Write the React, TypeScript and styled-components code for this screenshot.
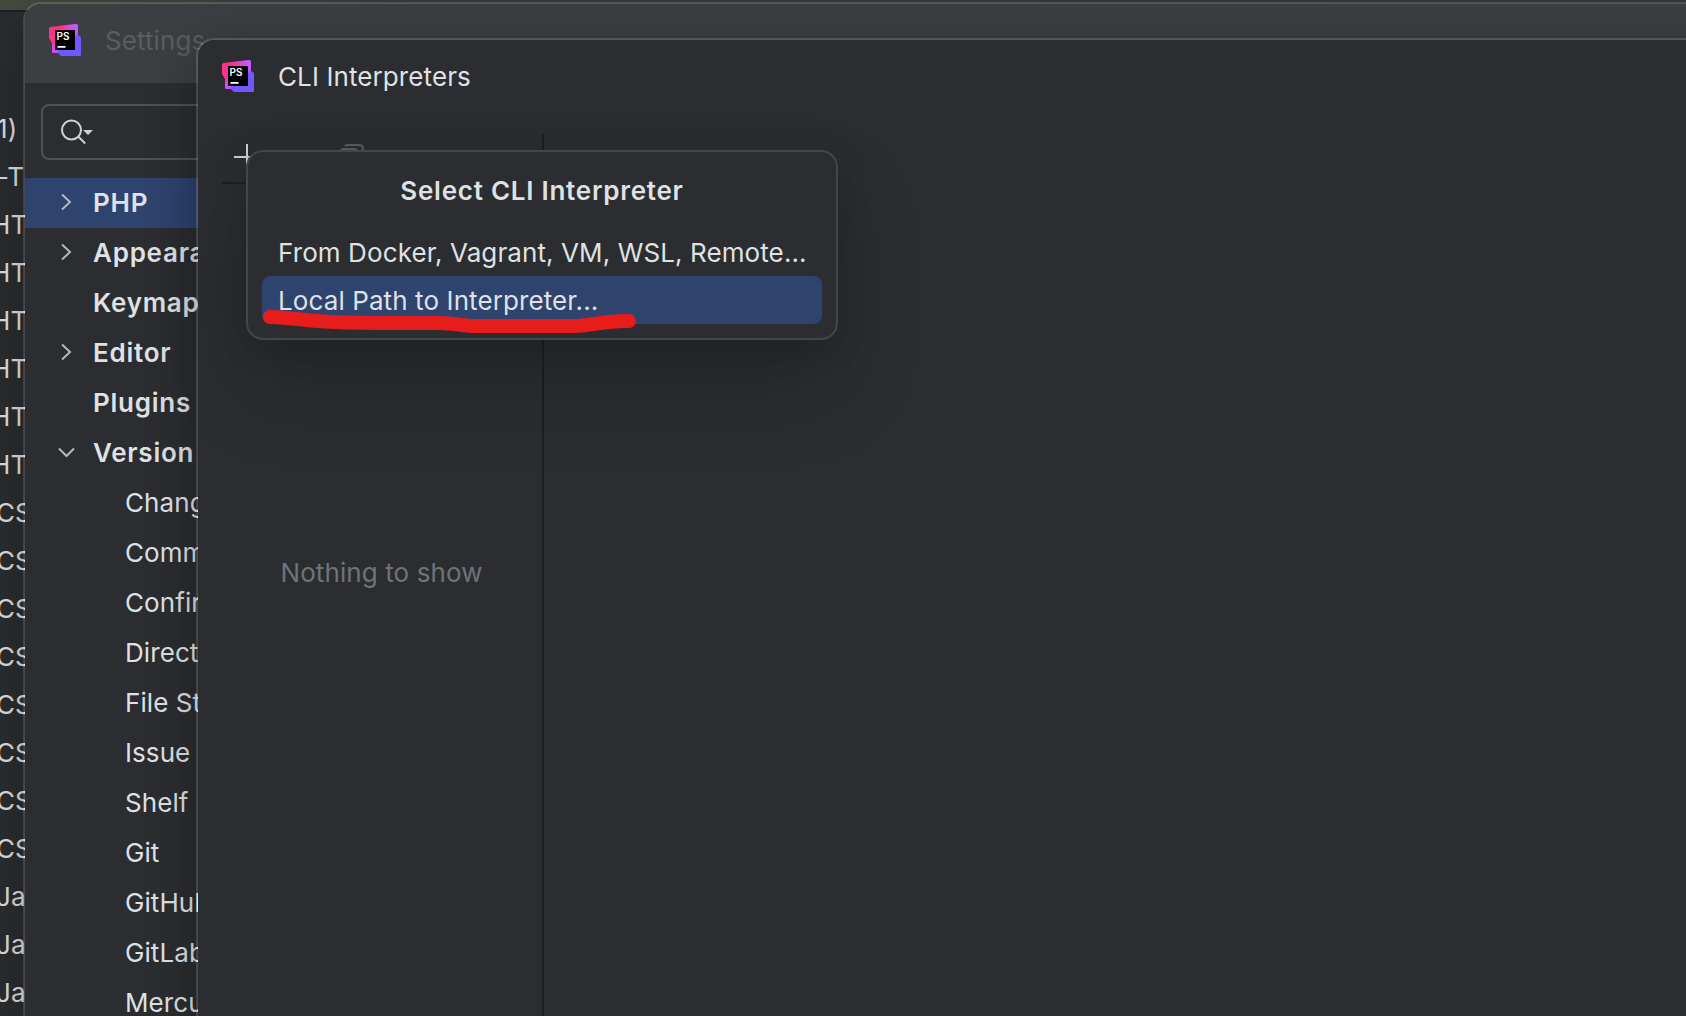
import React from 'react';
import styled, { createGlobalStyle } from 'styled-components';

const Global = createGlobalStyle`
  *, *::before, *::after { box-sizing: border-box; }
  html, body { margin: 0; height: 100%; overflow: hidden; background: #2b2d30; }
  body {
    font-family: Inter, 'Noto Sans', sans-serif;
    font-size: 26px;
    color: #dfe1e5;
    font-weight: 400;
    letter-spacing: 0.1px;
  }
`;

const Desktop = styled.main`
  position: relative;
  width: 1686px;
  height: 1016px;
  overflow: hidden;
  background: #2b2d30;
`;

const BackdropBar = styled.div`
  height: 12px;
  background: linear-gradient(90deg, #454d3f 0, #424940 100px, #3c3f3f 420px, #3a3c3e 100%);
  border-bottom: 2px solid #1e1f22;
`;

const FileList = styled.ul`
  list-style: none;
  margin: 0;
  padding: 93px 0 0;
  width: 40px;
  overflow: hidden;
`;

const FileRow = styled.li<{ $shift: number }>`
  height: 48px;
  line-height: 48px;
  white-space: nowrap;
  text-indent: ${(p) => p.$shift}px;
`;

const Window = styled.section<{ $x: number; $y: number }>`
  position: absolute;
  left: ${(p) => p.$x}px;
  top: ${(p) => p.$y}px;
  width: 1800px;
  height: 1200px;
  border: 2px solid rgba(255, 255, 255, 0.14);
  border-radius: 18px;
  overflow: hidden;
  background: #2b2d30;
  background-clip: padding-box;
  box-shadow: 0 12px 50px rgba(0, 0, 0, 0.32);
`;

const SettingsTitle = styled.header`
  display: flex;
  align-items: center;
  gap: 24px;
  height: 79px;
  padding: 0 0 7px 24px;
  background: #3c3f41;
  color: #5a5d63;
`;

const DialogTitle = styled.header`
  display: flex;
  align-items: center;
  gap: 24px;
  height: 72px;
  padding-left: 24px;
`;

const TitleText = styled.span`
  padding-top: 1px;
`;

const Sidebar = styled.div`
  display: flex;
  flex-direction: column;
  padding-top: 21px;
`;

const SearchField = styled.div`
  display: flex;
  align-items: center;
  height: 56px;
  width: 400px;
  margin: 0 0 18px 16px;
  padding-left: 16px;
  border: 2px solid #4e5157;
  border-radius: 8px;
`;

const TreeRow = styled.div<{ $selected?: boolean }>`
  display: flex;
  align-items: center;
  height: 50px;
  padding: 0 0 2px 31px;
  background: ${(p) => (p.$selected ? '#2e436e' : 'transparent')};
`;

const Arrow = styled.span`
  display: flex;
  justify-content: center;
  width: 20px;
  margin-right: 17px;
`;

const TreeLabel = styled.span<{ $child?: boolean }>`
  padding-left: ${(p) => (p.$child ? 32 : 0)}px;
  font-weight: ${(p) => (p.$child ? 400 : 560)};
  letter-spacing: ${(p) => (p.$child ? 0.08 : 0.75)}px;
  white-space: nowrap;
`;

const DialogBody = styled.div`
  display: flex;
  height: 1000px;
  padding: 22px 0 0 24px;
`;

const ListPane = styled.div`
  width: 320px;
  height: 100%;
`;

const Toolbar = styled.div`
  display: flex;
  align-items: center;
  gap: 78px;
  height: 50px;
  padding: 0 0 2px 11px;
  margin-right: 24px;
  border-bottom: 2px solid #1e1f22;
`;

const EmptyText = styled.p`
  margin: 373px 1px 0 0;
  line-height: 32px;
  text-align: center;
  color: #6f737a;
`;

const PaneDivider = styled.div`
  width: 2px;
  background: #1e1f22;
`;

const Popup = styled.div`
  position: absolute;
  left: 246px;
  top: 150px;
  width: 592px;
  height: 190px;
  padding: 14px;
  border: 2px solid #43454a;
  border-radius: 17px;
  background: #2b2d30;
  box-shadow: 0 46px 84px rgba(0, 0, 0, 0.18), 0 6px 36px rgba(0, 0, 0, 0.12);
`;

const PopupTitle = styled.h2`
  margin: 0 0 13px;
  padding-top: 1px;
  line-height: 48px;
  font-size: 26px;
  font-weight: 560;
  text-align: center;
  letter-spacing: 0.75px;
`;

const PopupItem = styled.div<{ $selected?: boolean }>`
  height: 48px;
  line-height: 50px;
  padding-left: 16px;
  border-radius: 8px;
  white-space: nowrap;
  background: ${(p) => (p.$selected ? '#2e436e' : 'transparent')};
`;

const MarkerStroke = styled.svg`
  position: absolute;
  left: 256px;
  top: 304px;
`;

const Logo = ({ id }: { id: string }) => (
  <svg width="32" height="32" viewBox="0 0 32 32">
    <defs>
      <linearGradient id={id} x1="0" y1="14" x2="29" y2="3" gradientUnits="userSpaceOnUse">
        <stop offset="0.45" stopColor="#ff318c" />
        <stop offset="0.9" stopColor="#c757ff" />
      </linearGradient>
      <linearGradient id={`${id}b`} x1="3" y1="16" x2="12" y2="26" gradientUnits="userSpaceOnUse">
        <stop offset="0.1" stopColor="#ff318c" />
        <stop offset="0.4" stopColor="#d249fc" />
      </linearGradient>
    </defs>
    <path d="M28 10l4 3v17.500q0 1.500-1.500 1.500H12l-5-5V10z" fill="#7256ff" />
    <path d="M3 14h10v15H4.500Q3 29 3 27.500z" fill={`url(#${id}b)`} />
    <path d="M9.500 26h9v6h-6L9 29z" fill="#7256ff" />
    <path d="M1.500 3L26 0h1.500Q29 0 29 1.500V10l-3 3H6v10L3 19 0 14V4.500Q0 3.200 1.500 3z" fill={`url(#${id})`} />
    <path d="M6 6h20v20H6z" />
    <path d="M8.500 22h8v1.700h-8z" fill="#fff" />
    <text x="7.600" y="16" fontSize="10" letterSpacing="0" fontWeight="600" fontFamily="Inter, sans-serif" fill="#fff">
      PS
    </text>
  </svg>
);

const SearchIcon = () => (
  <svg width="36" height="32" viewBox="0 0 36 32" fill="none">
    <circle cx="12.500" cy="14" r="9.500" stroke="#ced0d6" strokeWidth="2" />
    <path d="M19.200 20.500l7 7" stroke="#ced0d6" strokeWidth="2" />
    <path d="M24 14h10l-5 5z" fill="#ced0d6" />
  </svg>
);

const Chevron = ({ open }: { open?: boolean }) => (
  <svg width="20" height="20" viewBox="0 0 20 20" fill="none">
    <path d={open ? 'M3 6.500l7.500 7.500L18 6.500' : 'M6 2.500l8 7.500-8 7.500'} stroke="#b4b8bf" strokeWidth="2" />
  </svg>
);

const AddIcon = () => (
  <svg width="28" height="28" viewBox="0 0 28 28">
    <path d="M1 14h26M14 1v26" stroke="#ced0d6" strokeWidth="2" />
  </svg>
);

const CopyIcon = () => (
  <svg width="26" height="28" viewBox="0 0 26 28" fill="none" stroke="#5c5d60" strokeWidth="2">
    <path d="M6 3q1-1 3-1h11q4 0 4 4v15" />
    <rect x="1" y="6" width="18" height="20" rx="4" />
  </svg>
);

const files: { text: string; shift: number }[] = [
  { text: '1)', shift: -3 },
  { text: '-T', shift: -3 },
  ...Array.from({ length: 6 }, () => ({ text: 'HT', shift: -9 })),
  ...Array.from({ length: 8 }, () => ({ text: 'CS', shift: -4 })),
  ...Array.from({ length: 3 }, () => ({ text: 'Ja', shift: -4 })),
];

const groups: { label: string; arrow?: 'open' | 'closed'; child?: boolean; selected?: boolean }[] = [
  { label: 'PHP', arrow: 'closed', selected: true },
  { label: 'Appeara', arrow: 'closed' },
  { label: 'Keymap' },
  { label: 'Editor', arrow: 'closed' },
  { label: 'Plugins' },
  { label: 'Version', arrow: 'open' },
  { label: 'Chang', child: true },
  { label: 'Comm', child: true },
  { label: 'Confir', child: true },
  { label: 'Direct', child: true },
  { label: 'File St', child: true },
  { label: 'Issue', child: true },
  { label: 'Shelf', child: true },
  { label: 'Git', child: true },
  { label: 'GitHub', child: true },
  { label: 'GitLab', child: true },
  { label: 'Mercu', child: true },
];

export default function App() {
  return (
    <Desktop>
      <Global />
      <BackdropBar />
      <FileList>
        {files.map((f, i) => (
          <FileRow key={i} $shift={f.shift}>{f.text}</FileRow>
        ))}
      </FileList>

      <Window $x={23} $y={2}>
        <SettingsTitle>
          <Logo id="logoSettings" />
          <TitleText>Settings</TitleText>
        </SettingsTitle>
        <Sidebar>
          <SearchField>
            <SearchIcon />
          </SearchField>
          {groups.map((g) => (
            <TreeRow key={g.label} $selected={g.selected}>
              <Arrow>{g.arrow && <Chevron open={g.arrow === 'open'} />}</Arrow>
              <TreeLabel $child={g.child}>{g.label}</TreeLabel>
            </TreeRow>
          ))}
        </Sidebar>
      </Window>

      <Window $x={196} $y={38}>
        <DialogTitle>
          <Logo id="logoDialog" />
          <TitleText>CLI Interpreters</TitleText>
        </DialogTitle>
        <DialogBody>
          <ListPane>
            <Toolbar>
              <AddIcon />
              <CopyIcon />
            </Toolbar>
            <EmptyText>Nothing to show</EmptyText>
          </ListPane>
          <PaneDivider />
        </DialogBody>
      </Window>

      <Popup>
        <PopupTitle>Select CLI Interpreter</PopupTitle>
        <PopupItem>From Docker, Vagrant, VM, WSL, Remote...</PopupItem>
        <PopupItem $selected>Local Path to Interpreter...</PopupItem>
      </Popup>

      <MarkerStroke width="390" height="36" viewBox="256 304 390 36" fill="none">
        <path
          d="M270 317C290 317 310 322 345 322.500C375 323 405 323 440 323C455 323 462 326 475 326H575C590 326 600 321 629 321"
          stroke="#e71d1c"
          strokeWidth="14"
          strokeLinecap="round"
          strokeLinejoin="round"
        />
      </MarkerStroke>
    </Desktop>
  );
}
